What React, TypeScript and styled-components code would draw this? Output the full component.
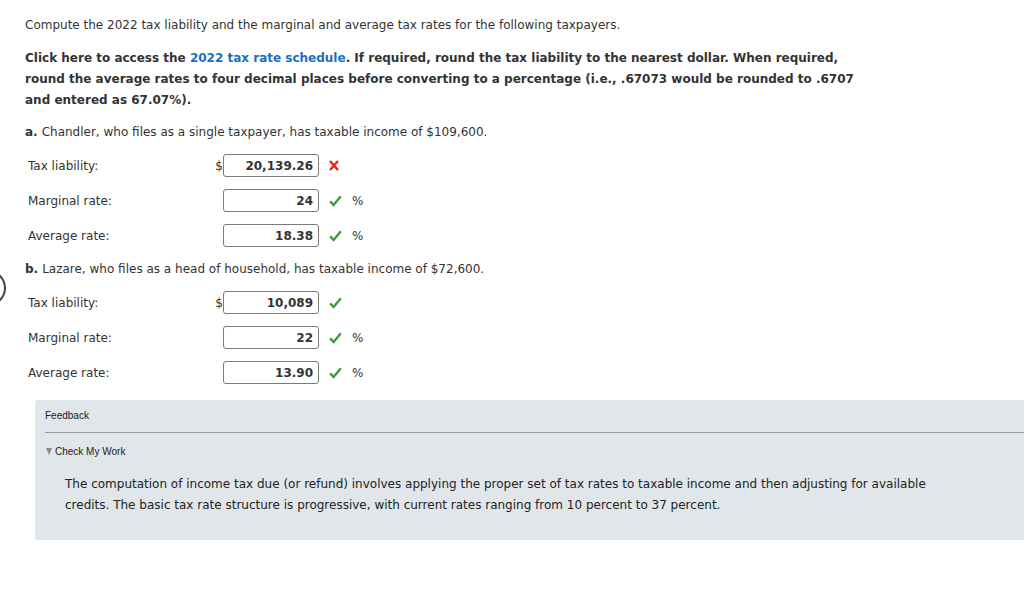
import React from "react";
import styled, { createGlobalStyle } from "styled-components";

const Global = createGlobalStyle`
  html, body { margin: 0; padding: 0; background: #fff; overflow: hidden; }
  body { font-family: "DejaVu Sans", Verdana, sans-serif; font-size: 12px; color: #333; }
`;

const Page = styled.div`
  position: relative;
  width: 1024px;
  height: 608px;
  padding: 15px 0 0 25px;
  box-sizing: border-box;
`;

const Intro = styled.p`
  margin: 0;
  line-height: 21px;
`;

const Instructions = styled.p`
  margin: 12px 0 0;
  line-height: 21px;
  font-weight: bold;
  white-space: nowrap;
`;

const Link = styled.a`
  color: #1a6fc0;
  text-decoration: none;
`;

const QuestionHead = styled.p<{ $top: number }>`
  margin: ${(p) => p.$top}px 0 0;
  line-height: 21px;
`;

const Letter = styled.b`
  margin-right: 4px;
`;

const Rows = styled.div`
  margin-top: 5px;
  padding-left: 3px;
`;

const Row = styled.div`
  display: flex;
  align-items: center;
  height: 35px;
`;

const Label = styled.span`
  width: 187px;
`;

const Dollar = styled.span`
  width: 8px;
  text-align: right;
  color: #333;
`;

const Field = styled.div`
  width: 96px;
  height: 23px;
  box-sizing: border-box;
  border: 1px solid #7a7a7a;
  border-radius: 3px;
  background: #fff;
  display: flex;
  align-items: center;
  justify-content: flex-end;
  padding-right: 5px;
  font-weight: bold;
  color: #333;
`;

const Mark = styled.span`
  width: 23px;
  display: flex;
  align-items: center;
  padding-left: 10px;
  box-sizing: content-box;
`;

const Percent = styled.span`
  font-size: 12px;
  color: #333;
`;

const FeedbackBox = styled.div`
  margin: 10px 0 0 10px;
  background: #e0e6e9;
  border-radius: 3px 0 0 3px;
  padding: 10px 0 24px 10px;
  font-family: "Liberation Sans", Arial, sans-serif;
`;

const FeedbackTitle = styled.div`
  font-size: 10px;
  line-height: 12px;
  color: #222;
`;

const Divider = styled.hr`
  margin: 10px 0 0;
  border: 0;
  border-top: 1px solid #9a9a9a;
  height: 0;
`;

const Toggle = styled.div`
  margin-top: 13px;
  font-size: 10px;
  line-height: 12px;
  color: #222;
  display: flex;
  align-items: center;
  gap: 3px;
  padding-left: 1px;
`;

const Tri = styled.span`
  width: 0;
  height: 0;
  border-left: 3px solid transparent;
  border-right: 3px solid transparent;
  border-top: 7px solid #8a8a8a;
  margin-top: -1px;
`;

const Explanation = styled.p`
  margin: 16px 0 0 20px;
  font-family: "DejaVu Sans", Verdana, sans-serif;
  font-size: 12px;
  line-height: 21px;
  color: #222;
  white-space: nowrap;
`;

const EdgeRing = styled.div`
  position: absolute;
  left: -30px;
  top: 270px;
  width: 32px;
  height: 32px;
  border: 2px solid #444;
  border-radius: 50%;
`;

const Cross = () => (
  <svg width="10" height="11" viewBox="0 0 10 11">
    <path d="M1 1 L9 10 M9 1 L1 10" stroke="#e8201a" strokeWidth="2.4" strokeLinecap="butt" fill="none" />
  </svg>
);

const Check = () => (
  <svg width="13" height="12" viewBox="0 0 13 12">
    <path d="M1.2 6.4 L4.6 10 L11.8 1.2" stroke="#3a9b3f" strokeWidth="2.4" fill="none" strokeLinejoin="miter" />
  </svg>
);

type Item = { label: string; value: string; dollar?: boolean; ok: boolean; pct?: boolean };

const QRow = ({ label, value, dollar, ok, pct }: Item) => (
  <Row>
    <Label>{label}</Label>
    <Dollar>{dollar ? "$" : ""}</Dollar>
    <Field>{value}</Field>
    <Mark>{ok ? <Check /> : <Cross />}</Mark>
    {pct && <Percent>%</Percent>}
  </Row>
);

const partA: Item[] = [
  { label: "Tax liability:", value: "20,139.26", dollar: true, ok: false },
  { label: "Marginal rate:", value: "24", ok: true, pct: true },
  { label: "Average rate:", value: "18.38", ok: true, pct: true },
];

const partB: Item[] = [
  { label: "Tax liability:", value: "10,089", dollar: true, ok: true },
  { label: "Marginal rate:", value: "22", ok: true, pct: true },
  { label: "Average rate:", value: "13.90", ok: true, pct: true },
];

export default function App() {
  return (
    <>
      <Global />
      <Page>
        <EdgeRing />
        <Intro>Compute the 2022 tax liability and the marginal and average tax rates for the following taxpayers.</Intro>
        <Instructions>
          Click here to access the <Link href="#">2022 tax rate schedule</Link>. If required, round the tax liability to the nearest dollar. When required,
          <br />
          round the average rates to four decimal places before converting to a percentage (i.e., .67073 would be rounded to .6707
          <br />
          and entered as 67.07%).
        </Instructions>
        <QuestionHead $top={11}>
          <Letter>a.</Letter>Chandler, who files as a single taxpayer, has taxable income of $109,600.
        </QuestionHead>
        <Rows>
          {partA.map((r) => (
            <QRow key={r.label} {...r} />
          ))}
        </Rows>
        <QuestionHead $top={6}>
          <Letter>b.</Letter>Lazare, who files as a head of household, has taxable income of $72,600.
        </QuestionHead>
        <Rows>
          {partB.map((r) => (
            <QRow key={r.label} {...r} />
          ))}
        </Rows>
        <FeedbackBox>
          <FeedbackTitle>Feedback</FeedbackTitle>
          <Divider />
          <Toggle>
            <Tri />Check My Work
          </Toggle>
          <Explanation>
            The computation of income tax due (or refund) involves applying the proper set of tax rates to taxable income and then adjusting for available
            <br />
            credits. The basic tax rate structure is progressive, with current rates ranging from 10 percent to 37 percent.
          </Explanation>
        </FeedbackBox>
      </Page>
    </>
  );
}
